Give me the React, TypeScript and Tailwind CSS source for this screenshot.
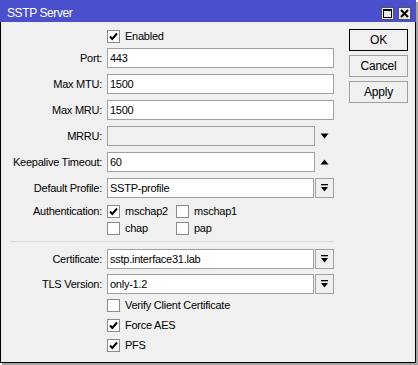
import * as React from 'react';

function Check({ checked }: { checked?: boolean }) {
  return (
    <span className="w-[13px] h-[13px] shrink-0 border border-[#8a8a8a] bg-white flex items-center justify-center">
      {checked && (
        <svg width="11" height="11" viewBox="0 0 11 11">
          <path d="M2 5.5 L4.3 8 L9 2.5" fill="none" stroke="#000" strokeWidth="2" />
        </svg>
      )}
    </span>
  );
}

function CheckRow({ label, checked, className = '' }: { label: string; checked?: boolean; className?: string }) {
  return (
    <div className={`flex items-center gap-[5px] ${className}`}>
      <Check checked={checked} />
      <span>{label}</span>
    </div>
  );
}

function Label({ text }: { text: string }) {
  return <span className="w-[101px] shrink-0 text-right">{text}</span>;
}

function DropBtn() {
  return (
    <span className="ml-[1px] w-[19px] h-[20px] shrink-0 border border-[#a0a0a0] bg-[#f0f0f0] flex items-center justify-center">
      <svg width="9" height="9" viewBox="0 0 9 9">
        <rect x="1" y="0" width="7" height="1.3" fill="#000" />
        <path d="M1 3 L8 3 L4.5 7.5 Z" fill="#000" />
      </svg>
    </span>
  );
}

function Row({ label, value, drop, className = '' }: { label: string; value: string; drop?: boolean; className?: string }) {
  return (
    <div className={`flex items-center h-[20px] ${className}`}>
      <Label text={label} />
      <div className={`ml-[5px] h-[20px] border border-[#a0a0a0] bg-white flex items-center pl-[2px] ${drop ? 'w-[207px]' : 'w-[227px]'}`}>
        {value}
      </div>
      {drop && <DropBtn />}
    </div>
  );
}

function Arrow({ up, className = '' }: { up?: boolean; className?: string }) {
  return (
    <span className={`w-[19px] flex items-center justify-center ${className}`}>
      <svg width="9" height="6" viewBox="0 0 9 6">
        {up ? <path d="M0.5 5.5 L8.5 5.5 L4.5 0.5 Z" fill="#000" /> : <path d="M0.5 0.5 L8.5 0.5 L4.5 5.5 Z" fill="#000" />}
      </svg>
    </span>
  );
}

function Btn({ text, main }: { text: string; main?: boolean }) {
  return (
    <div className={`w-[59px] h-[22px] flex items-center justify-center ${main ? 'border border-black' : 'border border-[#a0a0a0]'} bg-[#f0f0f0] text-[12px]`}>
      {text}
    </div>
  );
}

export default function App() {
  return (
    <div className="w-[418px] h-[365px] bg-white font-['Liberation_Sans',Arial,sans-serif] text-[11px] tracking-[-0.25px] text-black">
      <div className="w-[416px] h-[363px] border-x border-b border-black bg-[#f0f0f0] flex flex-col shadow-[2px_2px_0_#a3a3a3]">
        <div className="h-[22px] -mx-px bg-[#4a4fce] flex items-center pt-[4px] pl-[7px] pr-[5px] shrink-0">
          <span className="text-white text-[12px] tracking-[-0.4px] flex-1">SSTP Server</span>
          <span className="w-[13px] h-[13px] bg-[#e8e8e8] border border-[#555] flex items-center justify-center">
            <svg width="9" height="9" viewBox="0 0 9 9">
              <rect x="0.5" y="0.5" width="8" height="8" fill="none" stroke="#000" strokeWidth="1" />
              <rect x="0" y="0" width="9" height="2" fill="#000" />
            </svg>
          </span>
          <span className="ml-[4px] w-[13px] h-[13px] bg-[#e8e8e8] border border-[#555] flex items-center justify-center">
            <svg width="9" height="9" viewBox="0 0 9 9">
              <path d="M1 1 L8 8 M8 1 L1 8" stroke="#000" strokeWidth="2" />
            </svg>
          </span>
        </div>
        <div className="flex flex-1">
          <div className="w-[348px] flex flex-col">
            <div className="mt-[4px] h-[20px] flex items-center pl-[106px]">
              <CheckRow label="Enabled" checked />
            </div>
            <Row className="mt-[2px]" label="Port:" value="443" />
            <Row className="mt-[6px]" label="Max MTU:" value="1500" />
            <Row className="mt-[6px]" label="Max MRU:" value="1500" />
            <div className="mt-[6px] flex items-center h-[20px]">
              <Label text="MRRU:" />
              <div className="ml-[5px] w-[208px] h-[20px] border border-[#a0a0a0] bg-[#f0f0f0]" />
              <Arrow />
            </div>
            <div className="mt-[6px] flex items-center h-[20px]">
              <Label text="Keepalive Timeout:" />
              <div className="ml-[5px] w-[208px] h-[20px] border border-[#a0a0a0] bg-white flex items-center pl-[2px]">60</div>
              <Arrow up />
            </div>
            <Row className="mt-[6px]" label="Default Profile:" value="SSTP-profile" drop />
            <div className="mt-[5px] flex">
              <Label text="Authentication:" />
              <div className="ml-[5px] grid grid-cols-[69px_69px] gap-y-[1px]">
                <CheckRow className="h-[16px]" label="mschap2" checked />
                <CheckRow className="h-[16px]" label="mschap1" />
                <CheckRow className="h-[16px]" label="chap" />
                <CheckRow className="h-[16px]" label="pap" />
              </div>
            </div>
            <div className="mt-[5px] ml-[9px] w-[324px] h-px bg-[#d9d9d9]" />
            <Row className="mt-[7px]" label="Certificate:" value="sstp.interface31.lab" drop />
            <Row className="mt-[5px]" label="TLS Version:" value="only-1.2" drop />
            <div className="mt-[1px] flex flex-col pl-[106px]">
              <CheckRow className="h-[20px]" label="Verify Client Certificate" />
              <CheckRow className="h-[20px]" label="Force AES" checked />
              <CheckRow className="h-[20px]" label="PFS" checked />
            </div>
          </div>
          <div className="flex flex-col gap-[4px] pt-[7px]">
            <Btn text="OK" main />
            <Btn text="Cancel" />
            <Btn text="Apply" />
          </div>
        </div>
      </div>
    </div>
  );
}
